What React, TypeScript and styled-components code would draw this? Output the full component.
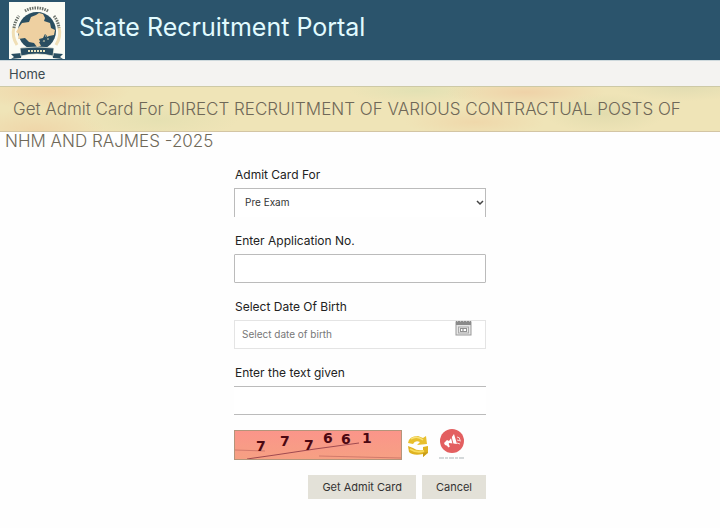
import React from "react";
import styled, { createGlobalStyle } from "styled-components";

const GlobalStyle = createGlobalStyle`
  *, *::before, *::after { box-sizing: border-box; }
  body {
    margin: 0;
    background: #fefefe;
    color: #222;
    font-family: Inter, "Liberation Sans", sans-serif;
  }
`;

const Header = styled.header`
  display: flex;
  align-items: flex-start;
  gap: 14px;
  height: 60px;
  padding: 2px 9px 0;
  background: #2b546c;
`;

const Emblem = styled.svg`
  display: block;
  flex: none;
  width: 56px;
  height: 57px;
`;

const SiteTitle = styled.h1`
  margin: 0;
  padding-top: 9px;
  color: #e2fbff;
  font-size: 25px;
  font-weight: 400;
  line-height: 32px;
`;

const Nav = styled.nav`
  display: flex;
  align-items: center;
  height: 26px;
  padding: 0 9px;
  background: #f4f3f1;
  border-top: 1px solid #cdd8dc;
`;

const NavLink = styled.a`
  color: #3d4a50;
  font-size: 13px;
  line-height: 20px;
  text-decoration: none;
`;

const Banner = styled.div`
  height: 46px;
  padding: 6px 5px 0;
  border-top: 1px solid #cdc9a6;
  border-bottom: 1px solid #d3c5a4;
  background:
    radial-gradient(ellipse 70px 14px at 66% 80%, #efcfa299 0%, transparent 100%),
    radial-gradient(ellipse 80px 14px at 73% 12%, #efd2a8 0%, transparent 100%),
    radial-gradient(ellipse 60px 20px at 84% 60%, #e2dcae 0%, transparent 100%),
    radial-gradient(ellipse 70px 14px at 95% 0%, #d9d8af99 0%, transparent 100%),
    radial-gradient(ellipse 70px 12px at 58% 8%, #d9dfb299 0%, transparent 100%),
    radial-gradient(ellipse 80px 18px at 22% 75%, #dfdeae99 0%, transparent 100%),
    radial-gradient(ellipse 70px 22px at 5% 100%, #efcc9f99 0%, transparent 100%),
    radial-gradient(ellipse 80px 18px at 7% 10%, #f0d5a9 0%, transparent 100%),
    #efe4b7;
`;

const PageTitle = styled.h2`
  margin: 0;
  color: #6f6858;
  font-size: 17px;
  font-weight: 300;
  line-height: 32px;
  text-indent: 8px;
`;

const Form = styled.form`
  display: flex;
  flex-direction: column;
  gap: 15px;
  width: 35%;
  min-width: 252px;
  margin: 0 auto;
  padding: 34px 0 28px;
`;

const Field = styled.div`
  display: flex;
  flex-direction: column;
  gap: 4px;
`;

const Label = styled.label`
  padding-left: 1px;
  font-size: 12px;
  line-height: 18px;
`;

const SelectFrame = styled.div`
  display: grid;
  align-items: center;
`;

const Select = styled.select`
  grid-area: 1 / 1;
  width: 100%;
  height: 29px;
  padding: 0 10px 2px;
  appearance: none;
  border: 1px solid #bbb;
  border-bottom: 0;
  border-radius: 0;
  background: #fff;
  color: #333;
  font: 10px/16px Inter, sans-serif;
`;

const Chevron = styled.svg`
  grid-area: 1 / 1;
  justify-self: end;
  width: 8px;
  height: 6px;
  margin-right: 2px;
  pointer-events: none;
`;

const Input = styled.input<{ $frame: "box" | "faint" | "lines" }>`
  width: 100%;
  height: 29px;
  padding: 0 7px 2px;
  border-style: solid;
  border-color: ${(p) => (p.$frame === "faint" ? "#e4e4e4" : "#bbb")};
  border-width: ${(p) => (p.$frame === "lines" ? "1px 0" : "1px")};
  border-radius: ${(p) => (p.$frame === "box" ? "1px" : "0")};
  background: #fff;
  color: #333;
  font: 10px/16px Inter, sans-serif;
  outline: none;
  &::placeholder { color: #777; opacity: 1; }
`;

const DateFrame = styled.div`
  display: grid;
  & > input { grid-area: 1 / 1; }
`;

const IconButton = styled.button<{ $w: number; $h: number }>`
  display: block;
  flex: none;
  width: ${(p) => p.$w}px;
  height: ${(p) => p.$h}px;
  padding: 0;
  border: 0;
  background: none;
  cursor: pointer;
  & > svg { display: block; width: 100%; height: 100%; }
`;

const DateButton = styled(IconButton)`
  grid-area: 1 / 1;
  justify-self: end;
  margin-right: 14px;
`;

const CaptchaRow = styled.div`
  display: flex;
  align-items: center;
  height: 30px;
  gap: 5px;
`;

const Captcha = styled.svg`
  display: block;
  flex: none;
  width: 168px;
  height: 30px;
  border: 1px solid #b5947a;
  font: 700 14px "DejaVu Sans", sans-serif;
`;

const Actions = styled.div`
  display: flex;
  justify-content: flex-end;
  gap: 6px;
`;

const Button = styled.button`
  height: 24px;
  padding: 0 14px;
  border: 0;
  background: #e3e1d8;
  color: #333;
  font: 11px/18px Inter, sans-serif;
  cursor: pointer;
`;

const digits = [
  { d: "7", x: 21, y: 20 },
  { d: "7", x: 45, y: 15 },
  { d: "7", x: 69, y: 19 },
  { d: "6", x: 88, y: 12 },
  { d: "6", x: 106, y: 13 },
  { d: "1", x: 127, y: 12 },
];

function StateEmblem() {
  return (
    <Emblem viewBox="0 0 56 57" role="img" aria-label="State emblem">
      <rect width="56" height="57" fill="#fbfcf5" />
      <path d="M8 43A23 23 0 0 1 5 25M50 25A23 23 0 0 1 47 43" fill="none" stroke="#f0dfb6" strokeWidth="3" />
      <path d="M5 26A23 23 0 0 1 10 14M16 9A23 23 0 0 1 39 9M45 14A23 23 0 0 1 50 26" fill="none" stroke="#6a716a" strokeWidth="3" strokeDasharray="1.5 1" />
      <circle cx="28" cy="29" r="19" fill="#294e61" />
      <path d="M10 25l3-4 7-1 2-5 5-2 3-2 4 1 2 4-1 3 6 2 1 5 4 2-1 5-5 1-4 2-1 3-5 1 2 4-4 1-3-4-5-1-4-4-7 1 1-5-3-2z" fill="#eed0a1" />
      <path d="M30 37l4-1 2-4 2 2-1 3 3 1-2 3-4-2-2 3z" fill="#294e61" />
      <path d="M36 34h1M34 39h2M38 37h2" stroke="#d8d7b4" />
      <path d="M2 52l11-1-1 5-10 1 3-2zM54 52l-11-1 1 5 10 1-3-2z" fill="#294e61" />
      <path d="M11 46q17-2 34 0l-1 8q-16-4-32 0z" fill="#294e61" stroke="#f9f9e8" strokeWidth=".7" />
      <path d="M19 49h18" fill="none" stroke="#e9e5c0" strokeWidth="2" strokeDasharray="2 1" />
    </Emblem>
  );
}

function CalendarIcon() {
  return (
    <svg viewBox="0 0 17 16" aria-hidden="true">
      <rect x="1" y="2" width="15" height="13" fill="#e6e6e6" stroke="#999" />
      <rect x="1" y="1" width="15" height="4" fill="#8a8a8a" />
      <path d="M2 1h13" stroke="#eee" strokeDasharray="1 2" />
      <path d="M3 7h11M3 13h11M3.500 7v6M13.500 7v6" stroke="#aaa" fill="none" />
      <rect x="5.500" y="8.500" width="6" height="3" fill="#fff" stroke="#909090" />
      <path d="M8 9v2" stroke="#777" />
    </svg>
  );
}

function RefreshIcon() {
  return (
    <svg viewBox="0 0 22 24" aria-hidden="true">
      <path d="M1 10Q2 3 11 3l5 2 3-2 1 8-10 1 3-3q-5-2-7 2z" fill="#e8bf2d" />
      <path d="M4 6q6-4 12 1" fill="none" stroke="#f7e27a" strokeWidth="1.500" />
      <path d="M21 13v7l-5 4v-3q-10 2-14-2l-1-6 5 2q4 3 10 2v-3z" fill="#dfb321" />
      <path d="M3 16q6 4 14 2" fill="none" stroke="#f8dc5b" strokeWidth="2" />
      <path d="M16 20v4l5-5z" fill="#c79c1b" />
    </svg>
  );
}

function AnnounceIcon() {
  return (
    <svg viewBox="0 0 26 32" aria-hidden="true">
      <circle cx="13" cy="12" r="12" fill="#e35f60" />
      <path d="M5 14l3-3 2 1 5-7 3 10-8-1-1 3-3-1z" fill="#fff" />
      <path d="M12 7l2 8" stroke="#e35f60" />
      <path d="M18 8q3 0 3 3M18 11l4 1M18 14l3 1" fill="none" stroke="#f9dddd" />
      <path d="M8 14l2 4" stroke="#fff" strokeWidth="2" />
      <path d="M0 29h26" stroke="#abb4b7" strokeDasharray="5 1 3 1" />
    </svg>
  );
}

export default function App() {
  return (
    <>
      <GlobalStyle />
      <Header>
        <StateEmblem />
        <SiteTitle>State Recruitment Portal</SiteTitle>
      </Header>
      <Nav aria-label="Main">
        <NavLink href="#">Home</NavLink>
      </Nav>
      <main>
        <Banner>
          <PageTitle>
            Get Admit Card For DIRECT RECRUITMENT OF VARIOUS CONTRACTUAL POSTS OF NHM AND RAJMES -2025
          </PageTitle>
        </Banner>
        <Form onSubmit={(e) => e.preventDefault()}>
          <Field>
            <Label htmlFor="exam">Admit Card For</Label>
            <SelectFrame>
              <Select id="exam">
                <option>Pre Exam</option>
              </Select>
              <Chevron viewBox="0 0 8 6" aria-hidden="true">
                <path d="M1 1l3 3 3-3" fill="none" stroke="#444" strokeWidth="1.500" />
              </Chevron>
            </SelectFrame>
          </Field>
          <Field>
            <Label htmlFor="application">Enter Application No.</Label>
            <Input id="application" type="text" $frame="box" />
          </Field>
          <Field>
            <Label htmlFor="birth">Select Date Of Birth</Label>
            <DateFrame>
              <Input id="birth" type="text" placeholder="Select date of birth" $frame="faint" />
              <DateButton type="button" aria-label="Open calendar" $w={17} $h={16}>
                <CalendarIcon />
              </DateButton>
            </DateFrame>
          </Field>
          <Field>
            <Label htmlFor="captcha">Enter the text given</Label>
            <Input id="captcha" type="text" $frame="lines" />
          </Field>
          <CaptchaRow>
            <Captcha viewBox="0 0 166 28" role="img" aria-label="Verification digits">
              <defs>
                <linearGradient id="salmon" x1="0" y1="0" x2="0" y2="1">
                  <stop offset="0" stopColor="#fb958a" />
                  <stop offset="1" stopColor="#f6a083" />
                </linearGradient>
              </defs>
              <rect width="166" height="28" fill="url(#salmon)" />
              <path d="M12 28L40 24 80 18 124 12" fill="none" stroke="#a04a50" />
              <path d="M0 19L30 20M84 25l82 2" fill="none" stroke="#d27a6c" />
              {digits.map((g) => (
                <text key={g.x} x={g.x} y={g.y} fill="#4c0812">{g.d}</text>
              ))}
            </Captcha>
            <IconButton type="button" aria-label="New text" $w={22} $h={24}>
              <RefreshIcon />
            </IconButton>
            <IconButton type="button" aria-label="Listen" $w={36} $h={32}>
              <AnnounceIcon />
            </IconButton>
          </CaptchaRow>
          <Actions>
            <Button type="submit">Get Admit Card</Button>
            <Button type="button">Cancel</Button>
          </Actions>
        </Form>
      </main>
    </>
  );
}
